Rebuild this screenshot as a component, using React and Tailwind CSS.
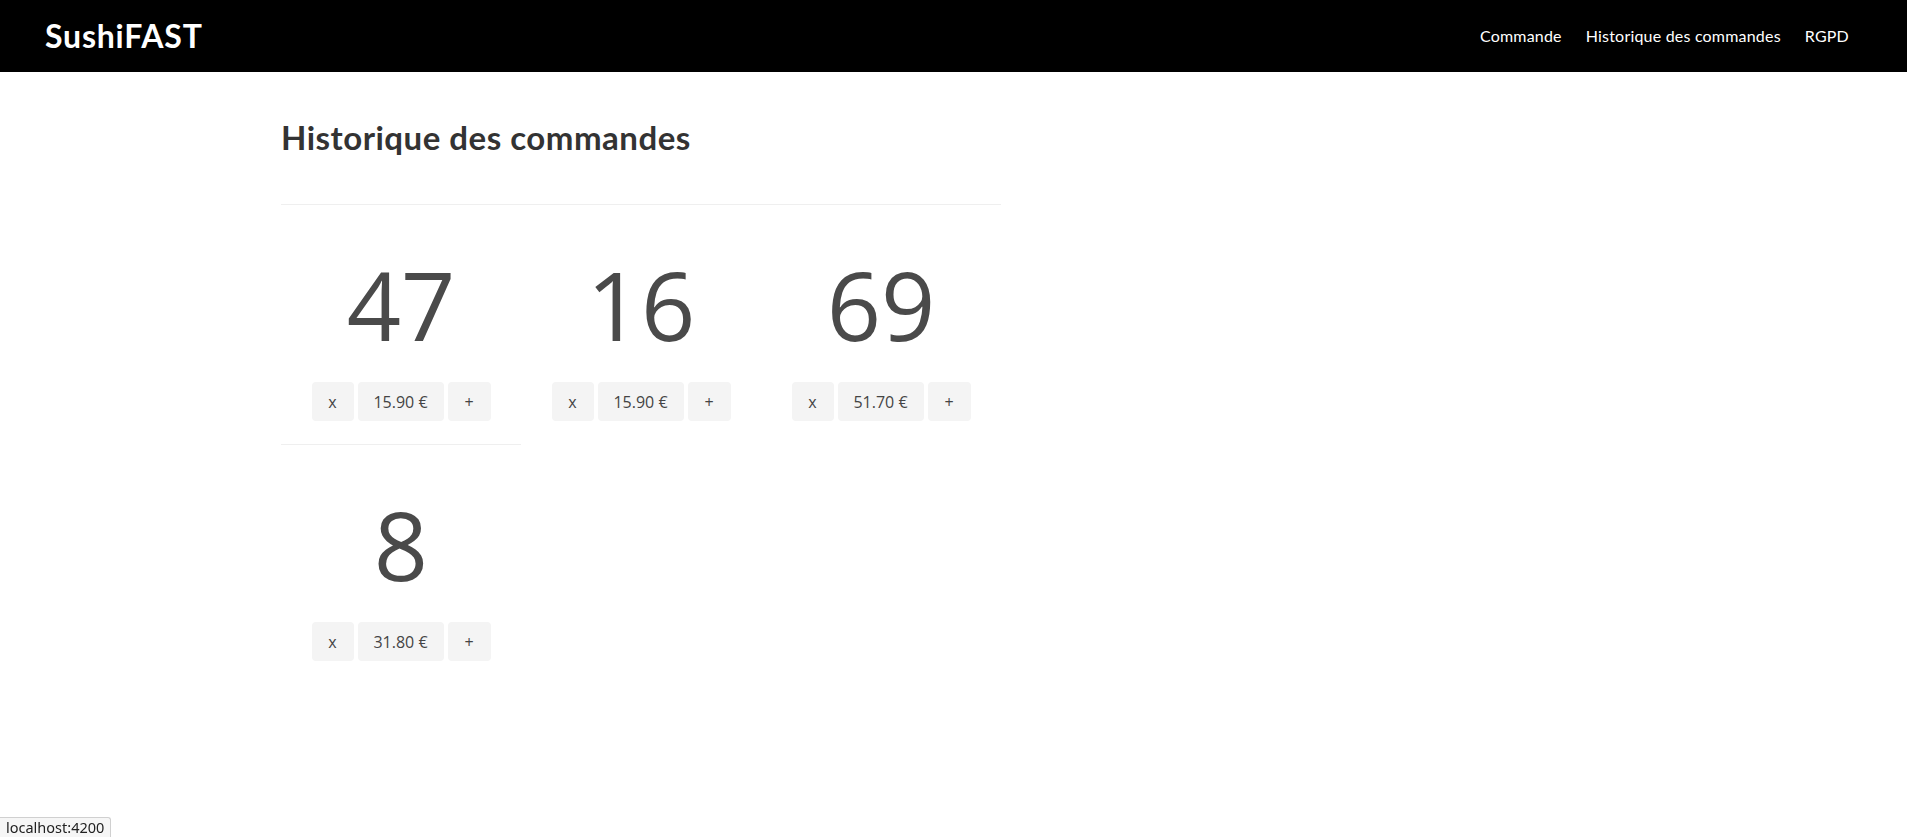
import React from 'react';

const orders = [
  { id: 47, total: '15.90 €' },
  { id: 16, total: '15.90 €' },
  { id: 69, total: '51.70 €' },
  { id: 8, total: '31.80 €' },
];

const OrderCard = ({ order }) => (
  <div className="border-t border-[#efefef] pt-[52px] pb-[23px] flex flex-col items-center">
    <div className="text-[95px] leading-none text-[#4a4a4a]" style={{ fontFamily: '"Open Sans", sans-serif' }}>
      {order.id}
    </div>
    <div className="mt-[30px] flex gap-[4px] text-[16px] text-[#444]" style={{ fontFamily: '"Open Sans", sans-serif' }}>
      <button className="h-[39px] w-[42px] rounded bg-[#f4f4f4]">x</button>
      <button className="h-[39px] w-[86px] rounded bg-[#f4f4f4]">{order.total}</button>
      <button className="h-[39px] w-[43px] rounded bg-[#f4f4f4]">+</button>
    </div>
  </div>
);

export default function App() {
  return (
    <div className="min-h-[837px] bg-white font-['Lato',sans-serif]">
      {/* Header */}
      <header className="h-[72px] bg-black flex items-center justify-between pl-[45px] pr-[58px]">
        <span className="text-white text-[32px] font-bold tracking-[0.8px]">SushiFAST</span>
        <nav className="flex items-center gap-[24px] text-white text-[16px] tracking-[0.2px]">
          <a href="#">Commande</a>
          <a href="#">Historique des commandes</a>
          <a href="#">RGPD</a>
        </nav>
      </header>

      {/* Content */}
      <main className="pl-[281px]">
        <div className="w-[720px]">
          <h1 className="mt-[46px] mb-[48px] text-[33px] leading-[38px] font-bold text-[#333] tracking-[0.5px]">
            Historique des commandes
          </h1>
          <div className="grid grid-cols-3">
            {orders.map(o => (
              <OrderCard key={o.id} order={o} />
            ))}
          </div>
        </div>
      </main>

      {/* Status bar */}
      <div className="fixed bottom-0 left-0 px-[6px] h-[20px] flex items-center bg-[#f6f6f6] border-t border-r border-[#d0d0d0] rounded-tr-[3px] text-[14.5px] text-[#222]" style={{ fontFamily: '"Noto Sans", sans-serif' }}>
        localhost:4200
      </div>
    </div>
  );
}
